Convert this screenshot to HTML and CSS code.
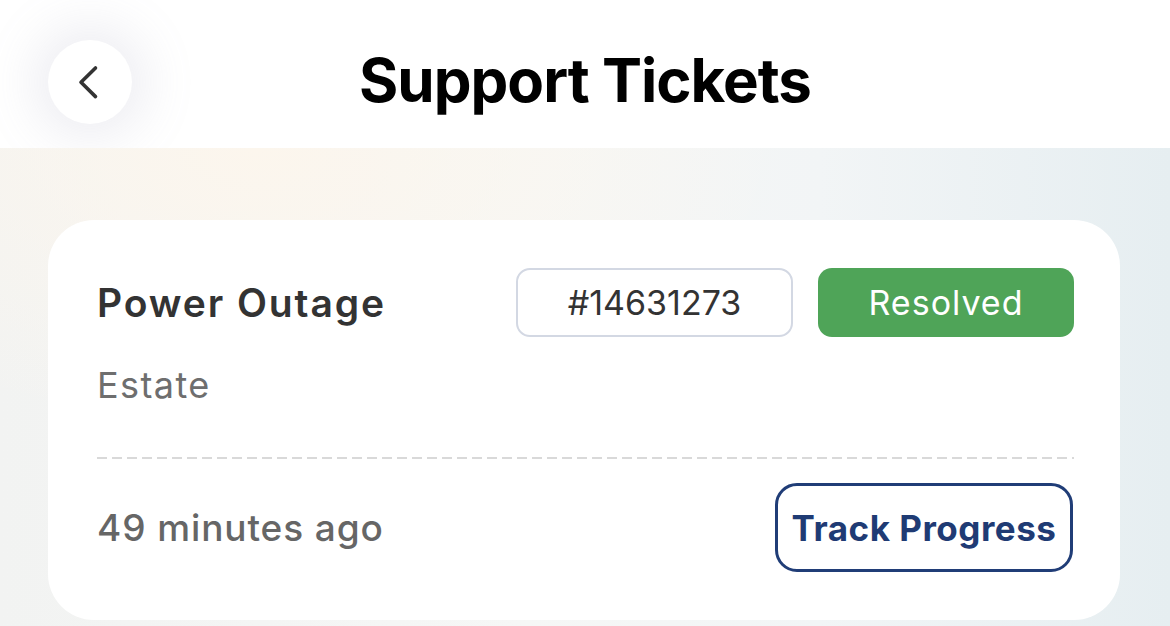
FILE: index.html
```html
<!DOCTYPE html>
<html lang="en">
<head>
<meta charset="utf-8">
<title>Support Tickets</title>
<link rel="stylesheet" href="styles.css">
</head>
<body>
<div class="page">
  <header class="topbar">
    <button class="back" aria-label="Back">
      <svg width="84" height="84" viewBox="0 0 84 84" aria-hidden="true">
        <path d="M47.5 28 L33 42.3 L47.5 56.6" fill="none" stroke="#333" stroke-width="3.6" stroke-linecap="round" stroke-linejoin="round"/>
      </svg>
    </button>
    <h1 class="title">Support Tickets</h1>
    <div class="spacer"></div>
  </header>
  <main class="content">
    <section class="card">
      <div class="card-head">
        <h2 class="ticket-name">Power Outage</h2>
        <div class="badges">
          <span class="ticket-id">#14631273</span>
          <span class="status">Resolved</span>
        </div>
      </div>
      <p class="category">Estate</p>
      <div class="divider"></div>
      <div class="card-foot">
        <span class="time">49 minutes ago</span>
        <button class="track">Track Progress</button>
      </div>
    </section>
  </main>
</div>
</body>
</html>
```

FILE: styles.css
```css
* { box-sizing: border-box; }
html, body { margin: 0; padding: 0; }
body {
  font-family: Inter, "Liberation Sans", sans-serif;
  background: #ffffff;
  width: 1170px;
  height: 626px;
  overflow: hidden;
}
.page {
  display: flex;
  flex-direction: column;
  height: 626px;
}
.topbar {
  height: 148px;
  flex: none;
  background: #ffffff;
  display: grid;
  grid-template-columns: 1fr auto 1fr;
  align-items: start;
  padding: 40px 48px 0 48px;
}
.back {
  width: 84px;
  height: 84px;
  border-radius: 50%;
  border: none;
  background: #ffffff;
  padding: 0;
  display: flex;
  align-items: center;
  justify-content: center;
  box-shadow: 0 0 50px 14px rgba(150, 150, 175, 0.17);
  justify-self: start;
}
.back svg { display: block; }
.title {
  margin: 0;
  font-family: Inter, "Liberation Sans", sans-serif;
  font-weight: 700;
  font-size: 60px;
  line-height: 80px;
  color: #000000;
  letter-spacing: -1px;
}
.content {
  flex: 1;
  padding: 72px 50px 0 48px;
  background:
    radial-gradient(ellipse 60% 80% at 22% 0%, rgba(252, 246, 237, 1) 0%, rgba(252, 246, 237, 0) 75%),
    linear-gradient(90deg, #f2f3f2 0%, #f6f7f6 45%, #f2f5f6 70%, #e6eef1 100%);
}
.card {
  background: #ffffff;
  border-radius: 46px;
  padding: 48px 46px 48px 49px;
}
.card-head {
  display: flex;
  align-items: center;
  justify-content: space-between;
}
.ticket-name {
  margin: 0;
  font-size: 39px;
  font-weight: 600;
  color: #333333;
  letter-spacing: 1.9px;
  line-height: 48px;
}
.badges {
  display: flex;
  gap: 25px;
}
.ticket-id, .status {
  height: 69px;
  border-radius: 14px;
  display: flex;
  align-items: center;
  justify-content: center;
  font-size: 34px;
  font-weight: 400;
}
.ticket-id {
  width: 277px;
  border: 2px solid #d3d8e3;
  color: #333333;
}
.status {
  width: 256px;
  background: #4fa458;
  color: #ffffff;
  letter-spacing: 1px;
}
.category {
  margin: 26px 0 0 0;
  font-size: 36px;
  line-height: 44px;
  color: #6e6e6e;
  letter-spacing: 1.4px;
}
.divider {
  margin-top: 50px;
  height: 2px;
  background-image: linear-gradient(90deg, #d9d9d9 0, #d9d9d9 10px, transparent 10px);
  background-size: 15px 2px;
  background-repeat: repeat-x;
}
.card-foot {
  margin-top: 24px;
  display: flex;
  align-items: center;
  justify-content: space-between;
}
.time {
  font-size: 37px;
  font-weight: 500;
  color: #666666;
  letter-spacing: 0.9px;
}
.track {
  width: 298px;
  height: 89px;
  border: 3px solid #203d77;
  border-radius: 22px;
  background: #ffffff;
  color: #1f3b74;
  font-family: Inter, "Liberation Sans", sans-serif;
  font-size: 35px;
  font-weight: 700;
  letter-spacing: 0.5px;
  padding: 0;
  margin-right: 1px;
}
```
